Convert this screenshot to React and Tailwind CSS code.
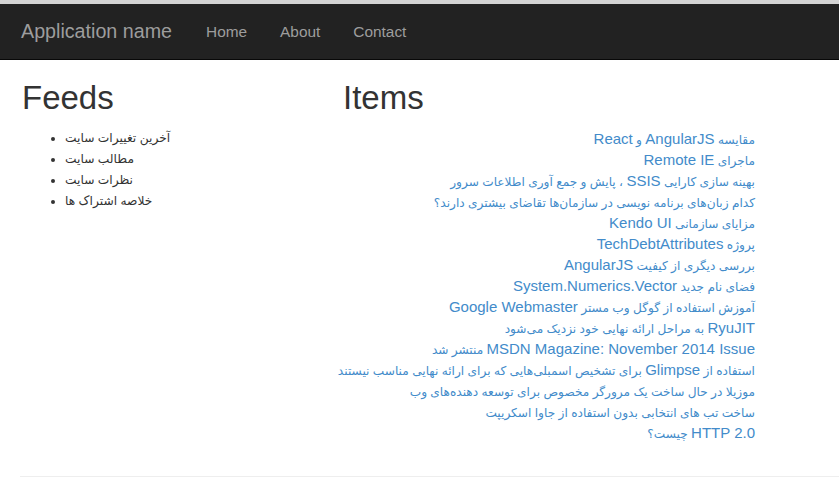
import React from 'react';

const FEEDS = [
  'آخرین تغییرات سایت',
  'مطالب سایت',
  'نظرات سایت',
  'خلاصه اشتراک ها',
];

const ITEMS = [
  'مقایسه AngularJS و React',
  'ماجرای Remote IE',
  'بهینه سازی کارایی SSIS ، پایش و جمع آوری اطلاعات سرور',
  'کدام زبان‌های برنامه نویسی در سازمان‌ها تقاضای بیشتری دارند؟',
  'مزایای سازمانی Kendo UI',
  'پروژه TechDebtAttributes',
  'بررسی دیگری از کیفیت AngularJS',
  'فضای نام جدید System.Numerics.Vector',
  'آموزش استفاده از گوگل وب مستر Google Webmaster',
  'RyuJIT به مراحل ارائه نهایی خود نزدیک می‌شود',
  'MSDN Magazine: November 2014 Issue منتشر شد',
  'استفاده از Glimpse برای تشخیص اسمبلی‌هایی که برای ارائه نهایی مناسب نیستند',
  'موزیلا در حال ساخت یک مرورگر مخصوص برای توسعه دهنده‌های وب',
  'ساخت تب های انتخابی بدون استفاده از جاوا اسکریپت',
  'HTTP 2.0 چیست؟',
];

const NAV = ['Home', 'About', 'Contact'];

// latin words keep the body size, persian runs are drawn smaller
function Mixed({ text }) {
  const parts = text.split(/([A-Za-z][A-Za-z0-9 .:]*[A-Za-z0-9])/);
  return parts.map((part, i) =>
    i % 2 === 1 ? (
      <span key={i} className="text-[15px] leading-none">{part}</span>
    ) : (
      <span key={i} className="text-[12.15px] leading-none">{part}</span>
    )
  );
}

function App() {
  return (
    <div className="min-h-[495px] overflow-hidden bg-white font-['Liberation_Sans','DejaVu_Sans',sans-serif] text-[15px] leading-[21px] text-[#333]">
      <div className="h-[4px] bg-[#d4d4d4]" />
      <nav className="flex h-[56px] items-center border-b border-[#080808] bg-[#222] pl-[21px]">
        <a className="text-[19.7px] text-[#9d9d9d]">Application name</a>
        <ul className="ml-[34px] flex gap-[33px] text-[15.4px] text-[#9d9d9d]">
          {NAV.map((item) => (
            <li key={item}>
              <a>{item}</a>
            </li>
          ))}
        </ul>
      </nav>

      <div className="pl-[20px] pt-[20px]">
        <div className="flex">
          <div className="w-[320px]">
            <h2 className="pl-[2px] text-[33px] leading-[35px]">Feeds</h2>
            <ul className="mt-[13px] list-disc pl-[45px] text-[12.25px]">
              {FEEDS.map((feed) => (
                <li key={feed}>{feed}</li>
              ))}
            </ul>
          </div>
          <div className="w-[415px]">
            <h2 className="pl-[3px] text-[33px] leading-[35px]">Items</h2>
            <div dir="rtl" className="mt-[13px] text-right text-[#428bca]">
              {ITEMS.map((item, index) => (
                <div key={index} className="h-[21px] whitespace-nowrap">
                  <a>
                    <Mixed text={item} />
                  </a>
                </div>
              ))}
            </div>
          </div>
        </div>
        <hr className="mt-[33px] border-t border-[#eee]" />
      </div>
    </div>
  );
}

export default App;
